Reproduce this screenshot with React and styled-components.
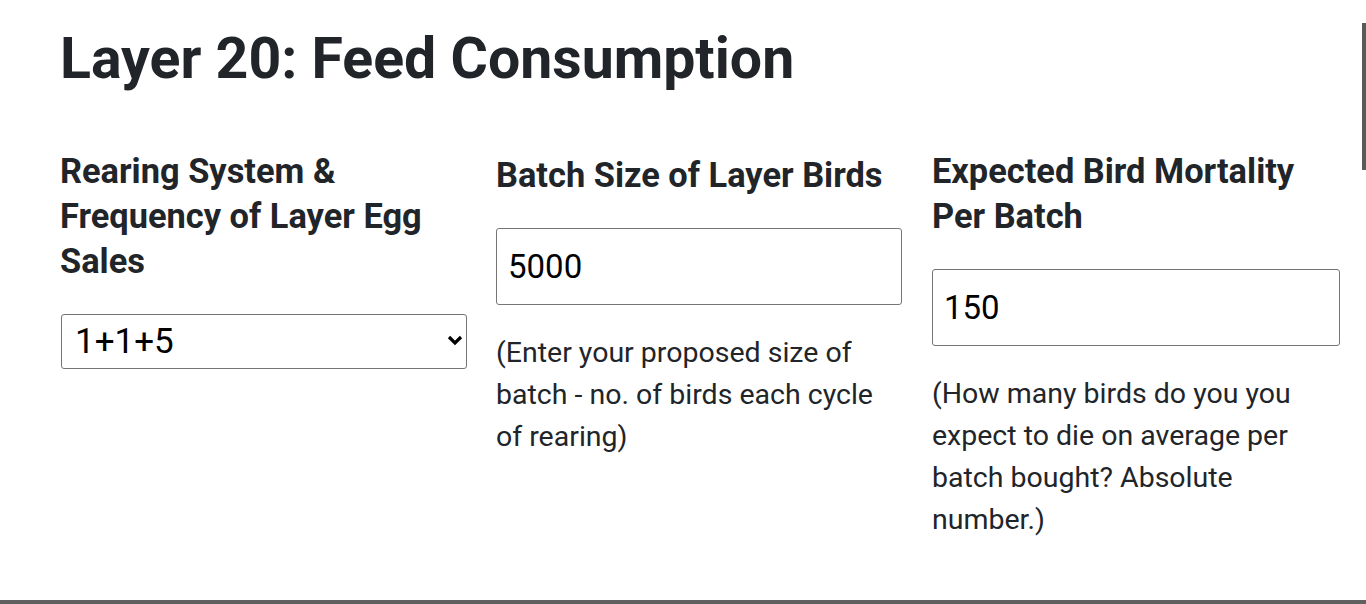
import styled, { createGlobalStyle } from 'styled-components'

const GlobalStyle = createGlobalStyle`
  html, body {
    margin: 0;
    padding: 0;
    background: #fff;
    overflow: hidden;
  }
  body {
    font-family: Roboto, "Liberation Sans", Arial, sans-serif;
    color: #212529;
  }
`

const fields = [
  {
    label: 'Rearing System & Frequency of Layer Egg Sales',
    kind: 'select',
    value: '1+1+5',
  },
  {
    label: 'Batch Size of Layer Birds',
    kind: 'input',
    value: '5000',
    help: '(Enter your proposed size of batch - no. of birds each cycle of rearing)',
    shift: 4,
  },
  {
    label: 'Expected Bird Mortality Per Batch',
    kind: 'input',
    value: '150',
    help: '(How many birds do you you expect to die on average per batch bought? Absolute number.)',
  },
]

function Chevron() {
  return (
    <svg width="16" height="11" viewBox="0 0 16 11">
      <path d="M2 2 L8 8 L14 2" fill="none" stroke="#000" strokeWidth="3.2" />
    </svg>
  )
}

function App() {
  return (
    <>
      <GlobalStyle />
      <Section>
        <Title>Layer 20: Feed Consumption</Title>
        <Row>
          {fields.map(({ label, kind, value, help, shift }) => (
            <Column key={label}>
              <Label shift={shift}>{label}</Label>
              {kind === 'select' ? (
                <SelectWrap>
                  <Select defaultValue={value}>
                    <option>1+1+5</option>
                    <option>1+1+4</option>
                    <option>1+2+5</option>
                  </Select>
                  <Arrow>
                    <Chevron />
                  </Arrow>
                </SelectWrap>
              ) : (
                <Input type="text" defaultValue={value} />
              )}
              {help && <Help>{help}</Help>}
            </Column>
          ))}
        </Row>
      </Section>
      <ScrollThumb />
    </>
  )
}

export default App

const Section = styled.div`
  width: 1280px;
  height: 575px;
  padding: 25px 26px 0 60px;
  border-bottom: 4px solid #606060;
`

const Title = styled.h1`
  margin: 0;
  font-size: 57.2px;
  font-weight: 700;
  line-height: 68px;
  color: #212529;
`

const Row = styled.div`
  display: grid;
  grid-template-columns: 406px 406px 408px;
  column-gap: 30px;
  margin-top: 56px;
`

const Column = styled.div`
  display: flex;
  flex-direction: column;
  align-items: stretch;
`

const Label = styled.label`
  display: block;
  font-size: 34.4px;
  font-weight: 700;
  line-height: 45px;
  margin-top: ${({ shift }) => shift || 0}px;
  margin-bottom: 30px;
`

const SelectWrap = styled.div`
  position: relative;
  width: 100%;
`

const Select = styled.select`
  appearance: none;
  display: block;
  box-sizing: border-box;
  height: 55px;
  width: 100%;
  margin-left: 1px;
  font-family: Roboto, "Liberation Sans", Arial, sans-serif;
  font-size: 35px;
  color: #000;
  padding: 0 40px 0 13px;
  border: 1px solid #767676;
  border-radius: 3px;
  background: #fff;
`

const Arrow = styled.span`
  position: absolute;
  top: 21px;
  right: 3px;
  width: 16px;
  height: 11px;
  pointer-events: none;
  svg {
    display: block;
  }
`

const Input = styled.input`
  box-sizing: border-box;
  height: 77px;
  width: 100%;
  font-family: Roboto, "Liberation Sans", Arial, sans-serif;
  font-size: 33px;
  color: #000;
  padding: 0 11px;
  border: 1px solid #767676;
  border-radius: 3px;
  outline: none;
`

const Help = styled.p`
  margin: 27px 0 0;
  font-size: 28.5px;
  line-height: 42px;
  color: #212529;
`

const ScrollThumb = styled.div`
  position: fixed;
  top: 23px;
  right: 0;
  width: 4px;
  height: 147px;
  background: #5a5a5a;
`
